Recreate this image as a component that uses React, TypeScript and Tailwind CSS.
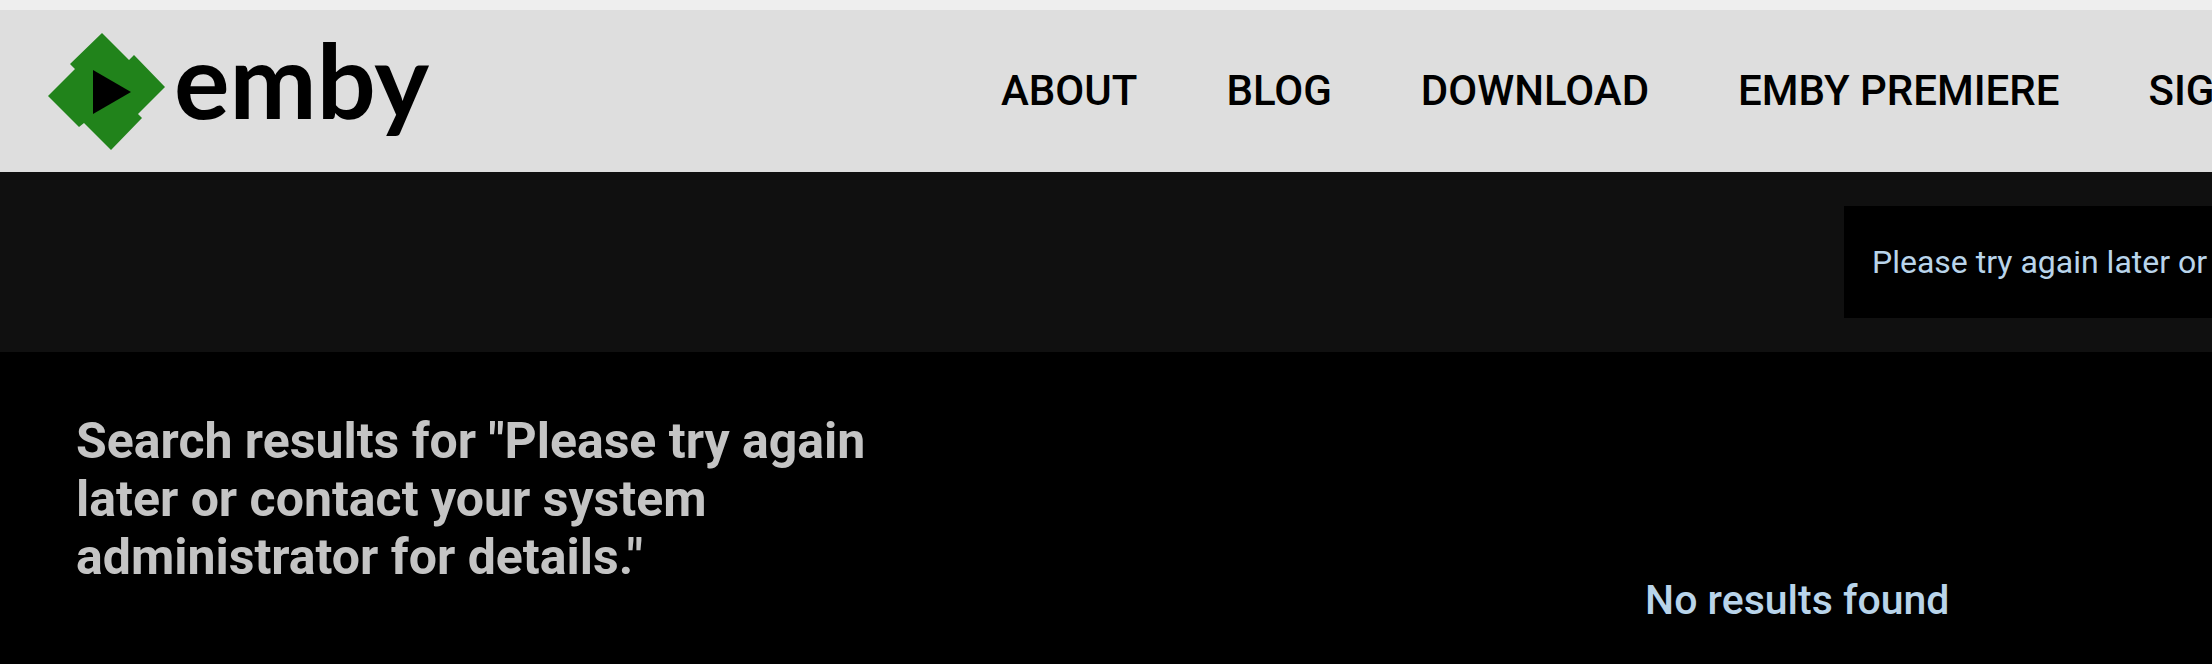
import React from 'react';

interface NavItem {
  label: string;
  href: string;
}

const navItems: NavItem[] = [
  { label: 'ABOUT', href: '#about' },
  { label: 'BLOG', href: '#blog' },
  { label: 'DOWNLOAD', href: '#download' },
  { label: 'EMBY PREMIERE', href: '#premiere' },
  { label: 'SIGN IN', href: '#signin' },
];

const query = 'Please try again later or contact your system administrator for details.';

const Logo: React.FC = () => (
  <a href="#home" aria-label="emby home" className="flex w-[390px] shrink-0 items-center gap-2 text-black">
    <svg className="mt-0.5" width="118" height="118" viewBox="0 0 118 118" aria-hidden="true">
      <path
        fill="#21831b"
        d="M54 0L81 27L86 22L117 54L90 81L94 85L63 117L36 90L31 94L0 63L27 36L22 31Z"
      />
      <path fill="#000" d="M45 37L83 59L45 81Z" />
    </svg>
    <span className="pb-6 font-['Lato',sans-serif] text-[104px] font-bold leading-[118px]">emby</span>
  </a>
);

const Header: React.FC = () => (
  <header className="flex h-[162px] items-center overflow-hidden bg-[#dedede] pl-12">
    <Logo />
    <nav className="ml-[563px] flex shrink-0 gap-[89px] whitespace-nowrap">
      {navItems.map((item) => (
        <a key={item.label} href={item.href} className="text-[42px] font-medium leading-[50px] text-black">
          {item.label}
        </a>
      ))}
    </nav>
  </header>
);

const SearchBar: React.FC = () => (
  <form className="flex justify-end bg-[#101010] py-[34px]">
    <input
      type="text"
      aria-label="Search"
      defaultValue={query}
      className="h-28 w-[368px] bg-black pl-7 text-[32px] text-[#b9d4ea] outline-none"
    />
  </form>
);

const Results: React.FC = () => (
  <section className="grid grid-cols-[5fr_3fr] pt-[60px]">
    <h1 className="max-w-[900px] pl-[76px] text-[50px] font-bold leading-[58px] text-[#c4c4c4]">
      {`Search results for "${query}"`}
    </h1>
    <p className="pt-[163px] text-center text-[41px] font-medium leading-[50px] text-[#b9d4ea]">
      No results found
    </p>
  </section>
);

export default function App() {
  return (
    <div className="min-h-screen overflow-x-hidden bg-black font-['Roboto',sans-serif]">
      <div className="h-[10px] bg-[#eeeeee]" />
      <Header />
      <SearchBar />
      <main>
        <Results />
      </main>
    </div>
  );
}
